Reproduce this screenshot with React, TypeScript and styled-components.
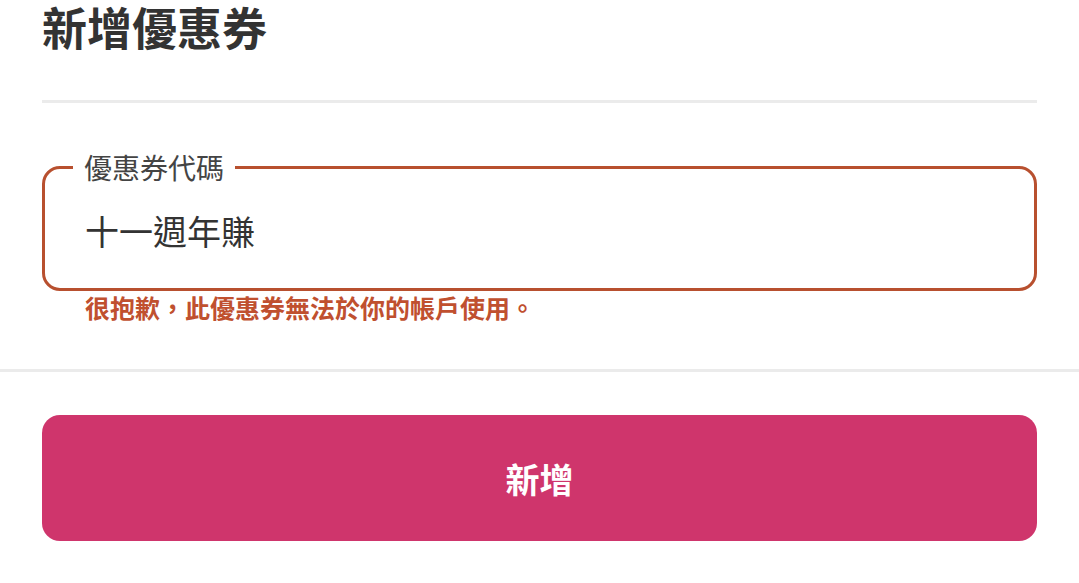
import React, { useState } from 'react';
import styled, { createGlobalStyle } from 'styled-components';

const GlobalStyle = createGlobalStyle`
  html, body {
    margin: 0;
    padding: 0;
    background: #ffffff;
  }
  body {
    font-family: "Noto Sans CJK TC", "Noto Sans", sans-serif;
    color: #333333;
  }
`;

class Styles {
  static Page = styled.div`
    width: 1079px;
    display: flex;
    flex-direction: column;
  `;

  static Section = styled.section`
    padding: 0 42px;
    display: flex;
    flex-direction: column;
  `;

  static Title = styled.h1`
    margin: 0;
    height: 58px;
    line-height: 54px;
    font-size: 45px;
    font-weight: 700;
    color: #333333;
  `;

  static Divider = styled.hr<{ $gap: number }>`
    margin: ${p => p.$gap}px 0 0;
    border: none;
    height: 3px;
    background: #ebebeb;
  `;

  static Field = styled.div`
    position: relative;
    margin-top: 63px;
    height: 115px;
    border: 3px solid #b8502f;
    border-radius: 18px;
    display: flex;
    align-items: center;
    padding: 4px 40px 0;
  `;

  static Label = styled.label`
    position: absolute;
    top: -20px;
    left: 28px;
    padding: 0 11px;
    background: #ffffff;
    font-size: 28px;
    line-height: 36px;
    color: #444444;
  `;

  static Input = styled.input`
    flex: 1;
    border: none;
    outline: none;
    padding: 0;
    background: transparent;
    font-family: inherit;
    font-size: 34px;
    line-height: 44px;
    color: #333333;
  `;

  static Error = styled.p`
    margin: 1px 0 0;
    padding-left: 43px;
    font-size: 25px;
    line-height: 30px;
    font-weight: 700;
    color: #c0502f;
  `;

  static Button = styled.button`
    margin-top: 43px;
    height: 126px;
    border: none;
    border-radius: 18px;
    background: #cf356c;
    color: #ffffff;
    font-family: inherit;
    font-size: 34px;
    font-weight: 700;
    cursor: pointer;
  `;
}

export default function App() {
  const [code, setCode] = useState('十一週年賺');

  return (
    <>
      <GlobalStyle />
      <Styles.Page>
        <Styles.Section>
          <Styles.Title>新增優惠券</Styles.Title>
          <Styles.Divider $gap={42} />
          <Styles.Field>
            <Styles.Label htmlFor="coupon">優惠券代碼</Styles.Label>
            <Styles.Input id="coupon" value={code} onChange={e => setCode(e.target.value)} />
          </Styles.Field>
          <Styles.Error>很抱歉，此優惠券無法於你的帳戶使用。</Styles.Error>
        </Styles.Section>
        <Styles.Divider $gap={47} />
        <Styles.Section>
          <Styles.Button>新增</Styles.Button>
        </Styles.Section>
      </Styles.Page>
    </>
  );
}
